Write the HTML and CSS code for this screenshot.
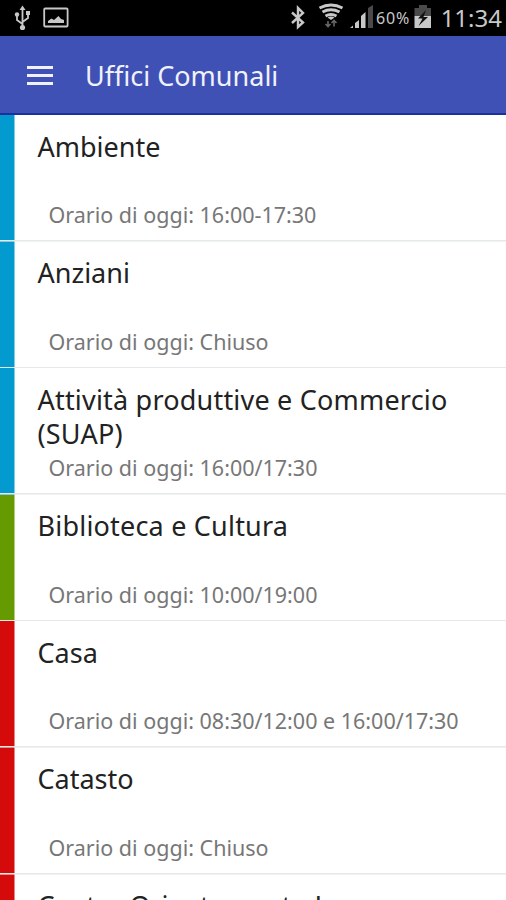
FILE: index.html
```
<!DOCTYPE html>
<html lang="it"><head><meta charset="utf-8"><title>Uffici Comunali</title><link rel="stylesheet" href="styles.css"></head>
<body>
<header class="status">
<svg class="status-icons" viewBox="0 0 506 36" width="506" height="36">
<g fill="none" stroke="#c8c8c8" stroke-width="1.8"><path d="M22.5 9V28M22.5 24L17 20V15M22.5 22L28 18V13"/><rect x="44.2" y="8.5" width="23.4" height="18" rx="1"/><path stroke-width="2.4" d="M292 12.5L303 22.5L298 27V8L303 13L292 23"/></g>
<g fill="#c8c8c8"><path d="M19.5 10L22.5 5.5L25.5 10Z"/><circle cx="22.5" cy="27.5" r="2.6"/><circle cx="17" cy="14.5" r="2.2"/><rect x="26" y="11" width="4" height="4"/><path d="M48 23V21L51.5 18.5L54 20L58.5 16L61 19L64 20V23Z"/></g>
<g fill="none" stroke="#c8c8c8" stroke-width="3"><path d="M319.5 8Q331 2 342.5 8M322.5 12Q331 7.5 339.5 12M325.5 16Q331 13 336.5 16"/></g><path d="M327.5 17.5Q331 15.5 334.5 17.5L331 20Z" fill="#c8c8c8"/>
<path d="M328 27V21M325.5 24L328 26.5L330.5 24M334 20.5V26.5M331.5 23L334 20.5L336.5 23" fill="none" stroke="#666" stroke-width="1.6"/>
<g fill="#c8c8c8"><path d="M350 28L353 25.5V28Z"/><path d="M355 28V23L359 20V28Z"/><path d="M361 28V16L365.5 12V28Z"/><path d="M368 28V8L373 5V28Z" fill="#4a4a4a"/></g>
<path d="M414.5 8H419V5H427V8H431V16H414.5Z" fill="#4a4a4a"/><path d="M414.5 16H431V28H414.5Z" fill="#c8c8c8"/><path d="M426 10L418 18.5H422.5L418.5 26L428 17H423.5Z" fill="#111"/>
</svg><span class="battery">60%</span><time class="clock">11:34</time></header>
<nav class="bar"><i class="menu"></i><h1>Uffici Comunali</h1></nav>
<main>
<article class="blue"><h2>Ambiente</h2><p>Orario di oggi: 16:00-17:30</p></article>
<article class="blue"><h2>Anziani</h2><p>Orario di oggi: Chiuso</p></article>
<article class="blue"><h2 class="wide">Attività produttive e Commercio (SUAP)</h2><p>Orario di oggi: 16:00/17:30</p></article>
<article class="green"><h2 class="wide">Biblioteca e Cultura</h2><p>Orario di oggi: 10:00/19:00</p></article>
<article class="red"><h2>Casa</h2><p>Orario di oggi: 08:30/12:00 e 16:00/17:30</p></article>
<article class="red"><h2>Catasto</h2><p>Orario di oggi: Chiuso</p></article>
<article class="red"><h2 class="last">Centro Orientamento Lavoro</h2></article>
</main></body></html>
```
FILE: styles.css
```
*{box-sizing:border-box}
body{margin:0;width:506px;height:900px;overflow:hidden;background:#fff;font-family:"Noto Sans",sans-serif;display:flex;flex-direction:column}
.status{height:36px;flex:none;background:#000;color:#c8c8c8;position:relative}
.status-icons{display:block}
.battery,.clock{position:absolute;white-space:nowrap}
.battery{left:376px;top:7px;font-size:16px;letter-spacing:.8px}
.clock{right:4px;top:0;font-size:24px;line-height:35px}
.bar{height:79px;flex:none;background:#3f51b5;border-bottom:2px solid #1b2f9e;display:flex;align-items:center;padding-left:27px;color:#f1f1fc}
.menu{width:26px;height:19px;margin-top:2px;border-top:3px solid;border-bottom:3px solid;display:flex;align-items:center}
.menu::after{content:"";width:26px;height:3px;background:#f1f1fc}
h1{font-size:27px;font-weight:400;margin:3px 0 0 32px;line-height:34px}
main{flex:1;min-height:0;overflow:hidden}
article{height:126.6px;padding:14.5px 20px 0 38px;display:flex;flex-direction:column;background-repeat:no-repeat;background-image:linear-gradient(#e6e9ea,#e6e9ea),linear-gradient(var(--bar),var(--bar));background-size:100% 1.6px,14.5px 100%;background-position:0 100%,0 0}
h2{font-size:27px;font-weight:400;line-height:34px;height:68px;margin:0 0 2.5px -.5px;color:#222}
.wide{letter-spacing:.2px}
.last{letter-spacing:-.1px}
p{font-size:21.5px;line-height:30px;margin:0 0 0 10.5px;color:#777;white-space:nowrap}
.blue{--bar:#039acf}.green{--bar:#659b00}.red{--bar:#d50b0b}
```
